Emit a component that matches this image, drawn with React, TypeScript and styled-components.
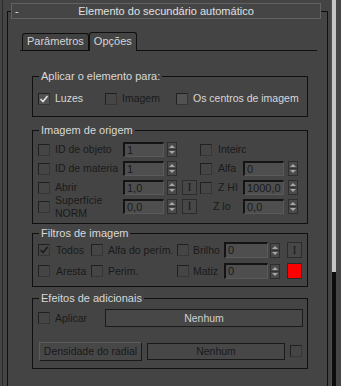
import React from 'react';
import styled, { createGlobalStyle } from 'styled-components';

const BG = '#444444';
const LINE = '#101010';
const LIGHT = '#d8d8d8';
const DIM = '#1a1a1a';

const GlobalStyle = createGlobalStyle`
  html, body {
    margin: 0;
    padding: 0;
    background: ${BG};
  }
  body {
    font-family: "Liberation Sans", Arial, sans-serif;
    font-size: 10.5px;
  }
`;

const Page = styled.div`
  width: 341px;
  height: 386px;
  overflow: hidden;
  display: flex;
  box-sizing: border-box;
  padding-left: 2px;
  background: ${BG};
`;

const Edge = styled.div`
  flex: none;
  width: 1px;
  margin-right: 4px;
  background: #2a2a2a;
`;

const Rollout = styled.div`
  flex: none;
  width: 321px;
  height: 420px;
  box-sizing: border-box;
  margin-top: 11px;
  border: 1px solid ${LINE};
  border-bottom: none;
`;

const TitleBar = styled.div`
  height: 16px;
  box-sizing: border-box;
  margin: -9px 6px 0 3px;
  display: grid;
  grid-template-columns: 1fr auto 1fr;
  align-items: center;
  border: 1px solid #616161;
  background: #454545;
  color: #e0e0e0;
  font-size: 11px;
  line-height: 14px;
`;

const Collapse = styled.span`
  padding-left: 3px;
`;

const ScrollBar = styled.div`
  flex: none;
  width: 4px;
  margin-left: 3px;
  border-left: 1px solid #505050;
  display: flex;
  flex-direction: column;
  background: #0c0c0c;
`;

const Thumb = styled.div`
  height: 272px;
  background: #c4c4c4;
`;

// tabs
const TabStrip = styled.div`
  height: 18px;
  margin: 13px 10px 0 12px;
  padding-left: 2px;
  display: flex;
  align-items: flex-end;
  border-bottom: 1px solid ${LINE};
`;

const Tab = styled.div<{ $active?: boolean }>`
  height: ${p => (p.$active ? 19 : 17)}px;
  margin-bottom: ${p => (p.$active ? -1 : 0)}px;
  box-sizing: border-box;
  padding: 0 4px;
  border: 1px solid ${LINE};
  border-bottom: none;
  border-radius: 3px 3px 0 0;
  background: ${p => (p.$active ? BG : '#414141')};
  color: #d4d4d4;
  font-size: 11px;
  line-height: ${p => (p.$active ? 17 : 15)}px;
`;

const Panel = styled.div`
  display: flex;
  flex-direction: column;
  padding: 25px 0 0 24px;
`;

const Group = styled.div<{ $top: number; $pb: number }>`
  width: 276px;
  box-sizing: border-box;
  margin-top: ${p => p.$top}px;
  padding: 0 0 ${p => p.$pb}px 5px;
  border: 1px solid ${LINE};
`;

const Legend = styled.div`
  width: fit-content;
  height: 14px;
  margin: -8px 0 0 1px;
  padding: 0 2px;
  background: ${BG};
  color: ${LIGHT};
  font-size: 11px;
  line-height: 14px;
  white-space: nowrap;
`;

const ApplyRow = styled.div`
  height: 19px;
  margin-top: 6px;
  display: grid;
  grid-template-columns: 67px 71px auto;
  align-items: center;
`;

const Item = styled.div`
  display: flex;
  align-items: center;
  gap: 5px;
`;

const Label = styled.span<{ $on?: boolean }>`
  color: ${p => (p.$on ? LIGHT : DIM)};
  white-space: nowrap;
  line-height: 13px;
`;

const TwoLine = styled(Label)`
  white-space: normal;
`;

const ZLabel = styled(Label)`
  grid-column: span 2;
  padding-left: 13px;
`;

const SourceGrid = styled.div`
  margin-top: 3px;
  display: grid;
  grid-template-columns: 17px 68px 44px 15px 18px 18px 25px 45px 10px;
  grid-auto-rows: 19px;
  align-items: center;
`;

const FilterGrid = styled.div`
  display: grid;
  grid-template-columns: 18px 35px 17px 69px 16px 31px 46px 17px 15px;
  grid-auto-rows: 20px;
  row-gap: 1px;
  align-items: center;
`;

const EffectRow = styled.div`
  height: 18px;
  margin-top: 4px;
  display: grid;
  grid-template-columns: 67px 198px;
  align-items: center;
`;

const RadialRow = styled.div`
  height: 20px;
  margin-top: 14px;
  padding-left: 1px;
  display: grid;
  grid-template-columns: 103px 138px 12px;
  column-gap: 5px;
  align-items: center;
`;

const Box = styled.span<{ $on?: boolean }>`
  flex: none;
  width: 12px;
  height: 12px;
  box-sizing: border-box;
  display: inline-flex;
  align-items: center;
  justify-content: center;
  border: 1px solid #202020;
  border-right-color: #363636;
  border-bottom-color: #363636;
  background: ${p => (p.$on ? '#525252' : '#454545')};
`;

const Field = styled.div<{ $w: number; $h: number }>`
  width: ${p => p.$w}px;
  height: ${p => p.$h}px;
  box-sizing: border-box;
  padding-left: 2px;
  border-top: 2px solid #141414;
  border-left: 2px solid #141414;
  border-right: 1px solid #5a5a5a;
  border-bottom: 1px solid #5a5a5a;
  background: #4e4e4e;
  color: ${DIM};
  font-size: 11px;
  line-height: ${p => p.$h - 3}px;
  white-space: nowrap;
  overflow: hidden;
`;

const SpinBox = styled.div<{ $h: number }>`
  width: 10px;
  height: ${p => p.$h}px;
  box-sizing: border-box;
  border: 1px solid #2e2e2e;
  background: #4a4a4a;
  display: flex;
  align-items: center;
  justify-content: center;
`;

const IButton = styled.div<{ $h: number }>`
  width: 15px;
  height: ${p => p.$h}px;
  box-sizing: border-box;
  border: 1px solid #2c2c2c;
  background: #474747;
  color: ${DIM};
  font-family: "Liberation Serif", serif;
  font-size: 12px;
  display: flex;
  align-items: center;
  justify-content: center;
`;

const Swatch = styled.div`
  width: 15px;
  height: 16px;
  box-sizing: border-box;
  border: 1px solid #2a2a2a;
  background: #ff0000;
`;

const Button = styled.div<{ $h: number; $on?: boolean; $raised?: boolean }>`
  height: ${p => p.$h}px;
  box-sizing: border-box;
  display: flex;
  align-items: center;
  justify-content: center;
  border: 1px solid #1a1a1a;
  ${p => (p.$raised ? 'border-top-color: #5c5c5c; border-left-color: #5c5c5c;' : '')}
  background: #474747;
  color: ${p => (p.$on ? '#d0d0d0' : DIM)};
  white-space: nowrap;
  overflow: hidden;
`;

const Check = ({ checked, on }: { checked?: boolean; on?: boolean }) => (
  <Box $on={on}>
    {checked && (
      <svg width="10" height="10" viewBox="0 0 10 10">
        <path d="M1.5 5 L4 7.5 L8.5 2" fill="none" stroke={on ? '#e2e2e2' : '#1c1c1c'} strokeWidth="1.6" />
      </svg>
    )}
  </Box>
);

const Spinner = ({ h = 15 }: { h?: number }) => (
  <SpinBox $h={h}>
    <svg width="8" height={h - 2} viewBox={`0 0 8 ${h - 2}`}>
      <path d="M1 5 L4 2 L7 5 Z" fill="#a6a6a6" />
      <path d={`M0 ${(h - 2) / 2} H8`} stroke="#333" strokeWidth="1" />
      <path d={`M1 ${h - 7} L4 ${h - 4} L7 ${h - 7} Z`} fill="#a6a6a6" />
    </svg>
  </SpinBox>
);

const CheckLabel = ({ text, checked, on }: { text: string; checked?: boolean; on?: boolean }) => (
  <Item>
    <Check checked={checked} on={on} />
    <Label $on={on}>{text}</Label>
  </Item>
);

export default function App() {
  return (
    <>
      <GlobalStyle />
      <Page>
        <Edge />
        <Rollout>
          <TitleBar>
            <Collapse>-</Collapse>
            <span>Elemento do secundário automático</span>
            <span />
          </TitleBar>

          <TabStrip>
            <Tab>Parâmetros</Tab>
            <Tab $active>Opções</Tab>
          </TabStrip>

          <Panel>
            <Group $top={0} $pb={8}>
              <Legend>Aplicar o elemento para:</Legend>
              <ApplyRow>
                <CheckLabel text="Luzes" checked on />
                <CheckLabel text="Imagem" />
                <CheckLabel text="Os centros de imagem" on />
              </ApplyRow>
            </Group>

            <Group $top={13} $pb={7}>
              <Legend>Imagem de origem</Legend>
              <SourceGrid>
                <Check />
                <Label>ID de objeto</Label>
                <Field $w={41} $h={15}>1</Field>
                <Spinner />
                <span />
                <Check />
                <Label>Inteirc</Label>
                <span />
                <span />

                <Check />
                <Label>ID de materia</Label>
                <Field $w={41} $h={15}>1</Field>
                <Spinner />
                <span />
                <Check />
                <Label>Alfa</Label>
                <Field $w={41} $h={15}>0</Field>
                <Spinner />

                <Check />
                <Label>Abrir</Label>
                <Field $w={41} $h={15}>1,0</Field>
                <Spinner />
                <IButton $h={15}>I</IButton>
                <Check />
                <Label>Z HI</Label>
                <Field $w={41} $h={15}>1000,0</Field>
                <Spinner />

                <Check />
                <TwoLine>
                  Superfície
                  <br />
                  NORM
                </TwoLine>
                <Field $w={41} $h={15}>0,0</Field>
                <Spinner />
                <IButton $h={15}>I</IButton>
                <ZLabel>Z lo</ZLabel>
                <Field $w={41} $h={15}>0,0</Field>
                <Spinner />
              </SourceGrid>
            </Group>

            <Group $top={9} $pb={5}>
              <Legend>Filtros de imagem</Legend>
              <FilterGrid>
                <Check checked />
                <Label>Todos</Label>
                <Check />
                <Label>Alfa do perím.</Label>
                <Check />
                <Label>Brilho</Label>
                <Field $w={44} $h={16}>0</Field>
                <Spinner h={15} />
                <IButton $h={16}>I</IButton>

                <Check />
                <Label>Aresta</Label>
                <Check />
                <Label>Perim.</Label>
                <Check />
                <Label>Matiz</Label>
                <Field $w={44} $h={16}>0</Field>
                <Spinner h={15} />
                <Swatch />
              </FilterGrid>
            </Group>

            <Group $top={11} $pb={7}>
              <Legend>Efeitos de adicionais</Legend>
              <EffectRow>
                <CheckLabel text="Aplicar" />
                <Button $h={18} $on>Nenhum</Button>
              </EffectRow>
              <RadialRow>
                <Button $h={19} $raised>Densidade do radial</Button>
                <Button $h={17}>Nenhum</Button>
                <Check />
              </RadialRow>
            </Group>
          </Panel>
        </Rollout>
        <ScrollBar>
          <Thumb />
        </ScrollBar>
      </Page>
    </>
  );
}
